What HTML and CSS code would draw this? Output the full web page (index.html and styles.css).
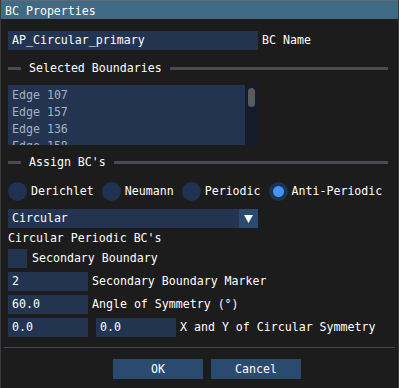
FILE: index.html
```html
<!DOCTYPE html>
<html lang="en">
<head>
    <meta charset="UTF-8">
    <title>BC Properties</title>
    <link rel="stylesheet" href="styles.css">
</head>
<body>
    <div class="window">
        <div class="title">BC Properties</div>
        <div class="content">
            <div class="row name-row">
                <div class="field wide">AP_Circular_primary</div>
                <span class="label">BC Name</span>
            </div>

            <div class="sep-text">
                <span class="dash"></span>
                <span class="sep-label">Selected Boundaries</span>
                <span class="line"></span>
            </div>

            <div class="listbox">
                <div class="items">
                    <div class="item">Edge 107</div>
                    <div class="item">Edge 157</div>
                    <div class="item">Edge 136</div>
                    <div class="item">Edge 158</div>
                </div>
                <div class="scrollbar"><div class="grab"></div></div>
            </div>

            <div class="sep-text assign">
                <span class="dash"></span>
                <span class="sep-label">Assign BC's</span>
                <span class="line"></span>
            </div>

            <div class="radios">
                <label class="radio"><span class="circle"></span>Derichlet</label>
                <label class="radio"><span class="circle"></span>Neumann</label>
                <label class="radio"><span class="circle"></span>Periodic</label>
                <label class="radio"><span class="circle checked"></span>Anti-Periodic</label>
            </div>

            <div class="combo">
                <span class="combo-value">Circular</span>
                <span class="combo-btn">
                    <svg width="9" height="8" viewBox="0 0 9 8"><polygon points="0,0 9,0 4.5,8" fill="#fff"/></svg>
                </span>
            </div>

            <div class="heading">Circular Periodic BC's</div>

            <label class="check-row">
                <span class="checkbox"></span>
                <span class="label">Secondary Boundary</span>
            </label>

            <div class="row">
                <div class="field small">2</div>
                <span class="label">Secondary Boundary Marker</span>
            </div>

            <div class="row">
                <div class="field small">60.0</div>
                <span class="label">Angle of Symmetry (°)</span>
            </div>

            <div class="row pair">
                <div class="field small">0.0</div>
                <div class="field small">0.0</div>
                <span class="label">X and Y of Circular Symmetry</span>
            </div>
        </div>

        <div class="bottom-sep"></div>

        <div class="buttons">
            <button class="btn">OK</button>
            <button class="btn">Cancel</button>
        </div>
    </div>
</body>
</html>
```

FILE: styles.css
```css
body {
    margin: 0;
    background-color: #1c1c1c;
    font-family: "DejaVu Sans Mono", "Liberation Mono", monospace;
    font-size: 11.6px;
    line-height: 13px;
    color: #ffffff;
}

.window {
    width: 399px;
    height: 388px;
    box-sizing: border-box;
    border-left: 1px solid #3a3a3a;
    border-right: 1px solid #3a3a3a;
    background-color: #1c1c1c;
}

.title {
    height: 19px;
    box-sizing: border-box;
    padding: 4px 0 0 4px;
    background-color: #3e6a84;
    border-top: 1px solid #5b6b78;
}

.content {
    padding: 12px 7px 0 7px;
    display: flex;
    flex-direction: column;
}

.row {
    display: flex;
    align-items: center;
    gap: 4px;
    height: 19px;
    margin-bottom: 4px;
}

.field {
    height: 19px;
    box-sizing: border-box;
    padding: 3px 4px;
    background-color: #233450;
    white-space: nowrap;
}

.field.wide {
    width: 250px;
}

.field.small {
    width: 80px;
}

.pair {
    gap: 0;
}

.pair .field + .field {
    margin-left: 8px;
}

.pair .label {
    margin-left: 4px;
}

.name-row {
    margin-bottom: 9px;
}

.sep-text {
    display: flex;
    align-items: center;
    height: 19px;
    margin-bottom: 7px;
}

.sep-text .dash {
    width: 13px;
    height: 3px;
    background-color: #4a4a52;
}

.sep-text .sep-label {
    padding: 0 8px;
}

.sep-text .line {
    flex: 1;
    height: 3px;
    margin-right: 3px;
    background-color: #4a4a52;
}

.listbox {
    width: 250px;
    height: 60px;
    display: flex;
    background-color: #233450;
    overflow: hidden;
    margin-bottom: 8px;
}

.items {
    flex: 1;
    padding: 4px 4px 0 4px;
    color: #a9b1be;
}

.item {
    height: 17px;
}

.scrollbar {
    width: 13px;
    background-color: #141c2a;
    position: relative;
}

.grab {
    position: absolute;
    left: 3px;
    top: 3px;
    width: 7px;
    height: 19px;
    border-radius: 4px;
    background-color: #5a5a5a;
}

.assign {
    margin-bottom: 10px;
}

.radios {
    display: flex;
    align-items: center;
    height: 19px;
    margin-bottom: 8px;
}

.radio {
    display: flex;
    align-items: center;
    gap: 4px;
    margin-right: 8px;
}

.circle {
    width: 19px;
    height: 19px;
    box-sizing: border-box;
    border-radius: 50%;
    background-color: #1f3252;
}

.circle.checked {
    border: 4px solid #1f3252;
    background-color: #4296fa;
}

.combo {
    width: 250px;
    height: 19px;
    display: flex;
    background-color: #233450;
    margin-bottom: 4px;
}

.combo-value {
    flex: 1;
    padding: 3px 4px;
}

.combo-btn {
    width: 19px;
    display: flex;
    align-items: center;
    justify-content: center;
    background-color: #2b4a70;
}

.heading {
    height: 13px;
    margin-bottom: 4px;
}

.check-row {
    display: flex;
    align-items: center;
    gap: 5px;
    height: 19px;
    margin-bottom: 4px;
}

.checkbox {
    width: 19px;
    height: 19px;
    background-color: #233450;
}

.bottom-sep {
    height: 1px;
    margin: 6px 3px 11px 3px;
    background-color: #4a4a52;
}

.buttons {
    display: flex;
    gap: 8px;
    padding-left: 112px;
}

.btn {
    width: 90px;
    height: 20px;
    border: none;
    background-color: #2b4a70;
    color: #ffffff;
    font-family: inherit;
    font-size: inherit;
    padding: 0;
}
```
